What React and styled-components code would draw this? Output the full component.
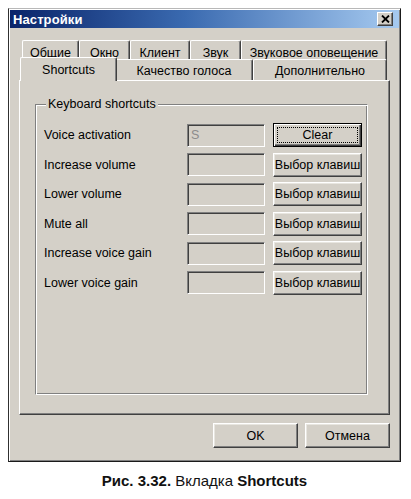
import React from "react";
import styled, { createGlobalStyle } from "styled-components";

const Global = createGlobalStyle`
  html, body { margin: 0; padding: 0; background: #ffffff; }
  body { font-family: "Liberation Sans", Arial, sans-serif; }
  * { box-sizing: border-box; }
`;

const Page = styled.div`
  width: 411px;
  height: 499px;
  padding: 8px 0 0 8px;
  display: flex;
  flex-direction: column;
`;

const Window = styled.div`
  width: 393px;
  height: 454px;
  background: #d4d0c8;
  border: 1px solid;
  border-color: #b8b8b8 #1a1a1a #1a1a1a #303030;
  box-shadow: inset 1px 1px 0 #ffffff, inset -1px -1px 0 #808080;
  padding: 1px;
  display: flex;
  flex-direction: column;
  font-size: 12.5px;
  color: #000;
`;

const TitleBar = styled.div`
  height: 18px;
  background: linear-gradient(to right, #0a246a 0%, #3a6ab0 45%, #a6caf0 100%);
  display: flex;
  align-items: center;
  justify-content: space-between;
  padding: 0 6px 0 3px;
`;

const Title = styled.span`
  color: #ffffff;
  font-weight: bold;
  font-size: 13px;
  letter-spacing: 0.1px;
`;

const CloseBtn = styled.div`
  width: 16px;
  height: 14px;
  background: #d4d0c8;
  border: 1px solid;
  border-color: #ffffff #404040 #404040 #ffffff;
  box-shadow: inset -1px -1px 0 #808080;
  display: flex;
  align-items: center;
  justify-content: center;
`;

const Body = styled.div`
  flex: 1;
  display: flex;
  flex-direction: column;
  padding: 12px 9px 0 9px;
`;

const TabRow = styled.div`
  display: flex;
  padding: 0 0 0 3px;
  height: ${(p) => p.$h}px;
  align-items: flex-start;
  position: relative;
  z-index: ${(p) => p.$z};
`;

const Tab = styled.div`
  flex: none;
  width: ${(p) => p.$w}px;
  height: ${(p) => p.$h}px;
  margin: ${(p) => (p.$active ? "-2px -2px 0 -2px" : "0")};
  background: #d4d0c8;
  border-top: 1px solid #ffffff;
  border-left: 1px solid #ffffff;
  border-right: 1px solid #404040;
  box-shadow: inset -1px 0 0 #808080;
  border-radius: 2px 2px 0 0;
  display: flex;
  align-items: center;
  padding-top: ${(p) => p.$pt}px;
  justify-content: center;
  white-space: nowrap;
  position: relative;
  z-index: ${(p) => (p.$active ? 3 : 1)};
`;

const Panel = styled.div`
  height: 335px;
  border: 1px solid;
  border-color: #ffffff #404040 #404040 #ffffff;
  box-shadow: inset -1px -1px 0 #808080;
  padding: 16px 21px 19px 15px;
  display: flex;
  position: relative;
  z-index: 2;
`;

const Group = styled.fieldset`
  flex: 1;
  margin: 0;
  border: 1px solid;
  border-color: #808080 #ffffff #ffffff #808080;
  box-shadow: inset 1px 1px 0 #ffffff, inset -1px -1px 0 #808080;
  padding: 12px 6px 0 8px;
  min-width: 0;
`;

const Legend = styled.legend`
  padding: 0 2px;
  margin-left: 2px;
  line-height: 14px;
  background: #d4d0c8;
`;

const Rows = styled.div`
  display: grid;
  grid-template-columns: 135px 78px 89px;
  column-gap: 8px;
  row-gap: 5.5px;
  align-items: center;
`;

const Label = styled.span`
  white-space: nowrap;
`;

const Field = styled.div`
  height: 23px;
  border: 1px solid;
  border-color: #808080 #ffffff #ffffff #808080;
  box-shadow: inset 1px 1px 0 #404040, inset -1px -1px 0 #d4d0c8;
  color: #8c8c8c;
  padding: 3px 0 0 3px;
  line-height: 15px;
`;

const Button = styled.div`
  height: ${(p) => p.$h || 24}px;
  width: ${(p) => (p.$w ? `${p.$w}px` : "auto")};
  background: #d4d0c8;
  border: 1px solid;
  border-color: ${(p) => (p.$default ? "#000000" : "#ffffff #404040 #404040 #ffffff")};
  box-shadow: ${(p) =>
    p.$default
      ? "inset 1px 1px 0 #ffffff, inset -1px -1px 0 #404040, inset -2px -2px 0 #808080"
      : "inset -1px -1px 0 #808080, inset 1px 1px 0 #e8e6e0"};
  display: flex;
  align-items: center;
  justify-content: center;
  white-space: nowrap;
  padding: ${(p) => (p.$default ? "3px" : "0")};
`;

const Focus = styled.div`
  width: 100%;
  height: 100%;
  border: 1px dotted #000;
  display: flex;
  align-items: center;
  justify-content: center;
`;

const Footer = styled.div`
  display: flex;
  justify-content: flex-end;
  gap: 7px;
  margin-top: 8px;
`;

const Caption = styled.div`
  width: 393px;
  text-align: center;
  margin-top: 10px;
  font-size: 15px;
  line-height: 18px;
  color: #111;
`;

const Bold = styled.b`
  font-weight: bold;
`;

const backTabs = [
  { t: "Общие", w: 57 },
  { t: "Окно", w: 51 },
  { t: "Клиент", w: 60 },
  { t: "Звук", w: 51 },
  { t: "Звуковое оповещение", w: 146 },
];

const frontTabs = [
  { t: "Shortcuts", w: 97, active: true },
  { t: "Качество голоса", w: 138 },
  { t: "Дополнительно", w: 134 },
];

const rows = [
  { label: "Voice activation", value: "S", clear: true },
  { label: "Increase volume" },
  { label: "Lower volume" },
  { label: "Mute all" },
  { label: "Increase voice gain" },
  { label: "Lower voice gain" },
];

export default function App() {
  return (
    <>
      <Global />
      <Page>
        <Window>
          <TitleBar>
            <Title>Настройки</Title>
            <CloseBtn>
              <svg width="9" height="8" viewBox="0 0 9 8">
                <path d="M1 0.5 L8 7.5 M8 0.5 L1 7.5" stroke="#000" strokeWidth="1.8" />
              </svg>
            </CloseBtn>
          </TitleBar>
          <Body>
            <TabRow $h={19} $z={0}>
              {backTabs.map((t) => (
                <Tab key={t.t} $w={t.w} $h={23} $pt={2}>
                  {t.t}
                </Tab>
              ))}
            </TabRow>
            <TabRow $h={21} $z={3}>
              {frontTabs.map((t) =>
                t.active ? (
                  <Tab key={t.t} $w={t.w} $h={24} $pt={0} $active>
                    {t.t}
                  </Tab>
                ) : (
                  <Tab key={t.t} $w={t.w} $h={21} $pt={1}>
                    {t.t}
                  </Tab>
                )
              )}
            </TabRow>
            <Panel>
              <Group>
                <Legend>Keyboard shortcuts</Legend>
                <Rows>
                  {rows.map((r) => (
                    <React.Fragment key={r.label}>
                      <Label>{r.label}</Label>
                      <Field>{r.value || ""}</Field>
                      {r.clear ? (
                        <Button $default>
                          <Focus>Clear</Focus>
                        </Button>
                      ) : (
                        <Button>Выбор клавиш</Button>
                      )}
                    </React.Fragment>
                  ))}
                </Rows>
              </Group>
            </Panel>
            <Footer>
              <Button $w={85} $h={25}>OK</Button>
              <Button $w={85} $h={25}>Отмена</Button>
            </Footer>
          </Body>
        </Window>
        <Caption>
          <Bold>Рис. 3.32.</Bold> Вкладка <Bold>Shortcuts</Bold>
        </Caption>
      </Page>
    </>
  );
}
